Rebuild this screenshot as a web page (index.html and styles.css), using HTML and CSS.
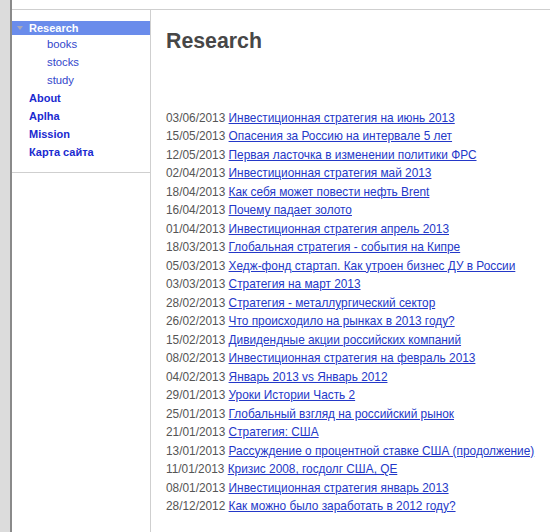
FILE: index.html
```html
<!DOCTYPE html>
<html>
<head>
<meta charset="utf-8">
<title>Research</title>
<link rel="stylesheet" href="styles.css">
</head>
<body>
<div class="frame">
  <div class="gutter"></div>
  <div class="page">
    <aside class="sidebar">
      <nav class="menu">
        <div class="item active"><span class="tri"></span>Research</div>
        <a class="sub" href="#">books</a>
        <a class="sub" href="#">stocks</a>
        <a class="sub" href="#">study</a>
        <a class="item" href="#">About</a>
        <a class="item" href="#">Aplha</a>
        <a class="item" href="#">Mission</a>
        <a class="item" href="#">Карта сайта</a>
      </nav>
    </aside>
    <main class="content">
      <h1 class="title">Research</h1>
      <ul class="posts">
        <li><span class="date">03/06/2013</span> <a href="#">Инвестиционная стратегия на июнь 2013</a></li>
        <li><span class="date">15/05/2013</span> <a href="#">Опасения за Россию на интервале 5 лет</a></li>
        <li><span class="date">12/05/2013</span> <a href="#">Первая ласточка в изменении политики ФРС</a></li>
        <li><span class="date">02/04/2013</span> <a href="#">Инвестиционная стратегия май 2013</a></li>
        <li><span class="date">18/04/2013</span> <a href="#">Как себя может повести нефть Brent</a></li>
        <li><span class="date">16/04/2013</span> <a href="#">Почему падает золото</a></li>
        <li><span class="date">01/04/2013</span> <a href="#">Инвестиционная стратегия апрель 2013</a></li>
        <li><span class="date">18/03/2013</span> <a href="#">Глобальная стратегия - события на Кипре</a></li>
        <li><span class="date">05/03/2013</span> <a href="#">Хедж-фонд стартап. Как утроен бизнес ДУ в России</a></li>
        <li><span class="date">03/03/2013</span> <a href="#">Стратегия на март 2013</a></li>
        <li><span class="date">28/02/2013</span> <a href="#">Стратегия - металлургический сектор</a></li>
        <li><span class="date">26/02/2013</span> <a href="#">Что происходило на рынках в 2013 году?</a></li>
        <li><span class="date">15/02/2013</span> <a href="#">Дивидендные акции российских компаний</a></li>
        <li><span class="date">08/02/2013</span> <a href="#">Инвестиционная стратегия на февраль 2013</a></li>
        <li><span class="date">04/02/2013</span> <a href="#">Январь 2013 vs Январь 2012</a></li>
        <li><span class="date">29/01/2013</span> <a href="#">Уроки Истории Часть 2</a></li>
        <li><span class="date">25/01/2013</span> <a href="#">Глобальный взгляд на российский рынок</a></li>
        <li><span class="date">21/01/2013</span> <a href="#">Стратегия: США</a></li>
        <li><span class="date">13/01/2013</span> <a href="#">Рассуждение о процентной ставке США (продолжение)</a></li>
        <li><span class="date">11/01/2013</span> <a href="#">Кризис 2008, госдолг США, QE</a></li>
        <li><span class="date">08/01/2013</span> <a href="#">Инвестиционная стратегия январь 2013</a></li>
        <li><span class="date">28/12/2012</span> <a href="#">Как можно было заработать в 2012 году?</a></li>
      </ul>
    </main>
  </div>
</div>
</body>
</html>
```

FILE: styles.css
```css
html, body {
  margin: 0;
  padding: 0;
  background: #fff;
  height: 100%;
  overflow: hidden;
}
body {
  font-family: "Liberation Sans", Arial, sans-serif;
}
.frame {
  display: flex;
  height: 532px;
}
.gutter {
  width: 10px;
  flex: none;
  background: #dcdcdc;
  border-right: 2px solid #8a8a8a;
}
.page {
  flex: 1;
  display: flex;
  margin-top: 9px;
  border-top: 1px solid #cfcfcf;
}
.sidebar {
  width: 138px;
  flex: none;
  border-right: 1px solid #cfcfcf;
}
.menu {
  display: flex;
  flex-direction: column;
  padding: 11px 0 11px;
  border-bottom: 1px solid #cfcfcf;
}
.menu a {
  text-decoration: none;
}
.item {
  font-size: 11px;
  font-weight: bold;
  line-height: 18px;
  color: #1a2ad0;
  padding-left: 17px;
}
.item.active {
  display: flex;
  align-items: center;
  line-height: 14px;
  height: 14px;
  padding-left: 5px;
  background: #6a8ceb;
  color: #fff;
}
.tri {
  width: 0;
  height: 0;
  border-left: 3px solid transparent;
  border-right: 3px solid transparent;
  border-top: 4px solid #a8a8b8;
  margin-right: 6px;
}
.sub {
  font-size: 11.3px;
  line-height: 18px;
  color: #3347cc;
  padding-left: 35px;
}
.content {
  flex: 1;
  padding-left: 15px;
}
.title {
  margin: 19px 0 0;
  font-size: 21.3px;
  line-height: 24px;
  font-weight: bold;
  color: #474747;
}
.posts {
  list-style: none;
  margin: 56px 0 0;
  padding: 0;
  font-size: 11.85px;
  line-height: 18.48px;
  white-space: nowrap;
}
.date {
  color: #555;
}
.posts a {
  color: #2438c8;
  text-decoration: underline;
}
```
